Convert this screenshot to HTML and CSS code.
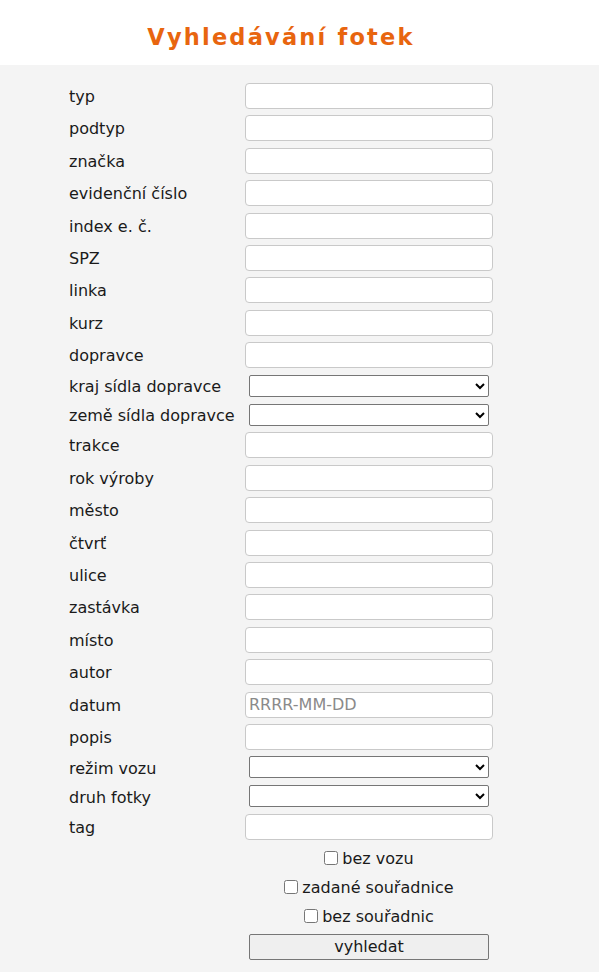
FILE: index.html
```
<!DOCTYPE html>
<html lang="cs">
<head>
<meta charset="utf-8">
<title>Vyhledávání fotek</title>
<link rel="stylesheet" href="styles.css">
</head>
<body>
<header class="head">
  <div class="wrap"><h1 class="title">Vyhledávání fotek</h1></div>
</header>
<main class="main">
  <form class="wrap form">
    <label class="lbl">typ</label><input class="inp" type="text">
    <label class="lbl">podtyp</label><input class="inp" type="text">
    <label class="lbl">značka</label><input class="inp" type="text">
    <label class="lbl">evidenční číslo</label><input class="inp" type="text">
    <label class="lbl">index e. č.</label><input class="inp" type="text">
    <label class="lbl">SPZ</label><input class="inp" type="text">
    <label class="lbl">linka</label><input class="inp" type="text">
    <label class="lbl">kurz</label><input class="inp" type="text">
    <label class="lbl">dopravce</label><input class="inp" type="text">
    <label class="lbl sl">kraj sídla dopravce</label><select class="sel"><option></option></select>
    <label class="lbl sl">země sídla dopravce</label><select class="sel"><option></option></select>
    <label class="lbl">trakce</label><input class="inp" type="text">
    <label class="lbl">rok výroby</label><input class="inp" type="text">
    <label class="lbl">město</label><input class="inp" type="text">
    <label class="lbl">čtvrť</label><input class="inp" type="text">
    <label class="lbl">ulice</label><input class="inp" type="text">
    <label class="lbl">zastávka</label><input class="inp" type="text">
    <label class="lbl">místo</label><input class="inp" type="text">
    <label class="lbl">autor</label><input class="inp" type="text">
    <label class="lbl">datum</label><input class="inp" type="text" placeholder="RRRR-MM-DD">
    <label class="lbl">popis</label><input class="inp" type="text">
    <label class="lbl sl">režim vozu</label><select class="sel"><option></option></select>
    <label class="lbl sl">druh fotky</label><select class="sel"><option></option></select>
    <label class="lbl">tag</label><input class="inp" type="text">
    <label class="chk"><input type="checkbox" class="cb">bez vozu</label>
    <label class="chk"><input type="checkbox" class="cb">zadané souřadnice</label>
    <label class="chk"><input type="checkbox" class="cb">bez souřadnic</label>
    <div class="btnrow"><button type="button" class="btn">vyhledat</button></div>
  </form>
</main>
</body>
</html>
```
FILE: styles.css
```
html, body {
  margin: 0;
  padding: 0;
}
body {
  font-family: "DejaVu Sans", Verdana, sans-serif;
  color: #1a1a1a;
  background: #f4f4f4;
}
.head {
  background: #ffffff;
  height: 65px;
}
.wrap {
  margin-left: 65px;
  width: 432px;
}
.title {
  margin: 0;
  padding-top: 22px;
  text-align: center;
  font-size: 22.5px;
  line-height: 31px;
  font-weight: bold;
  letter-spacing: 2.2px;
  color: #e8650f;
}
.main {
  padding-top: 18px;
  padding-bottom: 20px;
}
.form {
  display: grid;
  grid-template-columns: 176px 248px;
  row-gap: 6.4px;
  padding-left: 4px;
  box-sizing: border-box;
  font-size: 16px;
}
.lbl {
  display: flex;
  align-items: center;
  padding-top: 1px;
  white-space: nowrap;
}
.inp {
  box-sizing: border-box;
  width: 248px;
  height: 26px;
  margin: 0;
  border: 1px solid #c9c9c9;
  border-radius: 4px;
  background: #fff;
  padding: 0 3px;
  font-family: "DejaVu Sans", Verdana, sans-serif;
  font-size: 16px;
  color: #1a1a1a;
}
.inp::placeholder {
  color: #8a8a8a;
}
.sel {
  box-sizing: border-box;
  width: 240px;
  height: 22px;
  margin: 0 0 0.6px 4px;
  border: 1px solid #767676;
  border-radius: 2px;
  background-color: #fff;
}
.chk {
  grid-column: 2;
  display: flex;
  align-items: center;
  justify-content: center;
  height: 22.6px;
  font-size: 16px;
}
.cb {
  width: 14px;
  height: 14px;
  margin: 0 4px 0 0;
}
.btnrow {
  grid-column: 2;
  display: flex;
  padding-left: 4px;
}
.btn {
  box-sizing: border-box;
  width: 240px;
  height: 26px;
  margin: 0;
  border: 1px solid #767676;
  border-radius: 2px;
  background: #efefef;
  font-family: "DejaVu Sans", Verdana, sans-serif;
  font-size: 16px;
  color: #1a1a1a;
}
```
